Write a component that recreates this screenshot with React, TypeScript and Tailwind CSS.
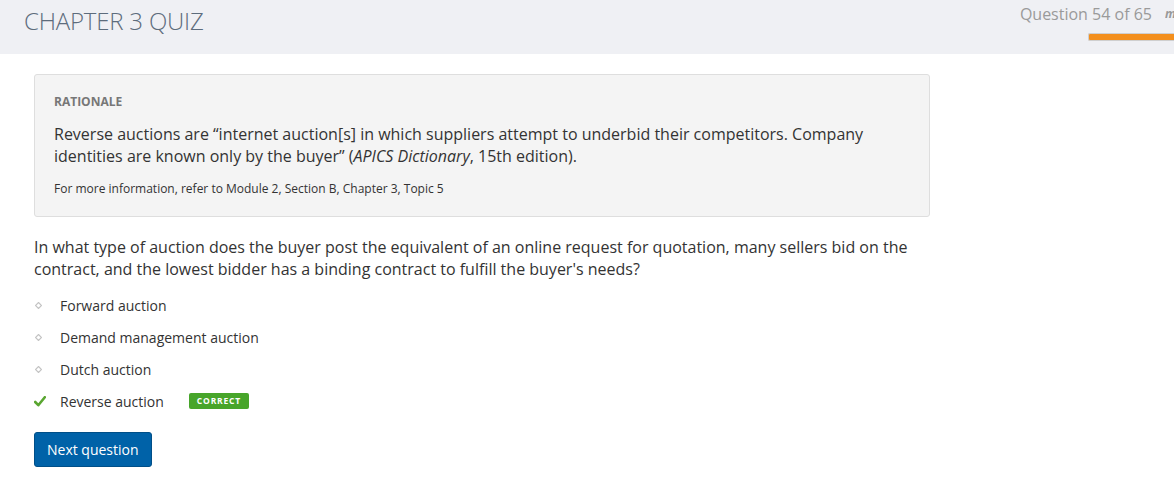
const options = [
  { label: "Forward auction", correct: false },
  { label: "Demand management auction", correct: false },
  { label: "Dutch auction", correct: false },
  { label: "Reverse auction", correct: true },
];

const Bullet = () => (
  <svg width="7" height="7" viewBox="0 0 7 7">
    <path d="M3.5 0.5 L6.5 3.5 L3.5 6.5 L0.5 3.5 Z" fill="none" stroke="#c4c4c4" strokeWidth="1.2" />
  </svg>
);

const Check = () => (
  <svg width="12" height="11" viewBox="0 0 12 11">
    <path d="M1.2 6 L4.3 9.2 L10.8 1.2" fill="none" stroke="#5aa631" strokeWidth="2.6" strokeLinecap="round" strokeLinejoin="round" />
  </svg>
);

export default function App() {
  return (
    <div className="w-[1174px] h-[485px] bg-white overflow-hidden font-['Open_Sans',sans-serif] text-[#333]">
      <header className="h-[54px] bg-[#eff0f4] flex justify-between">
        <h1 className="pl-[24px] pt-[5px] text-[24px] font-light text-[#5d6c7c] tracking-[-0.2px] leading-[32px]">
          CHAPTER 3 QUIZ
        </h1>
        <div className="flex flex-col items-end pt-[3px]">
          <div className="flex items-center whitespace-nowrap">
            <span className="text-[16px] text-[#9a9a9a] leading-[22px]">Question 54 of 65</span>
            <span className="ml-[13px] text-[12px] italic font-bold text-[#999] w-[9px] overflow-hidden">m</span>
          </div>
          <div className="mt-[8px] w-[86px] h-[8px] bg-[#f38f1d] border-l border-t border-b border-[#cfcfcf] rounded-l-[2px]" />
        </div>
      </header>

      <main className="pl-[34px] pt-[20px] w-[930px]">
        <section className="bg-[#f4f4f4] border border-[#dedede] rounded-[3px] px-[19px] pt-[17px] pb-[17px]">
          <div className="text-[12px] font-bold text-[#777] leading-[20px]">RATIONALE</div>
          <p className="mt-[11px] text-[16px] leading-[22px] text-[#333]">
            Reverse auctions are “internet auction[s] in which suppliers attempt to underbid their competitors. Company
            identities are known only by the buyer” (<em>APICS Dictionary</em>, 15th edition).
          </p>
          <p className="mt-[12px] text-[12px] leading-[20px] text-[#333]">
            For more information, refer to Module 2, Section B, Chapter 3, Topic 5
          </p>
        </section>

        <p className="mt-[19px] text-[16px] leading-[22px] text-[#333] pr-[10px]">
          In what type of auction does the buyer post the equivalent of an online request for quotation, many sellers bid on the
          contract, and the lowest bidder has a binding contract to fulfill the buyer's needs?
        </p>

        <ul className="mt-[9px] flex flex-col">
          {options.map((o) => (
            <li key={o.label} className="h-[32px] flex items-center text-[14px] text-[#333]">
              <span className="w-[26px] flex items-center justify-start">
                {o.correct ? <Check /> : <span className="pl-[1px] flex"><Bullet /></span>}
              </span>
              <span>{o.label}</span>
              {o.correct && (
                <span className="ml-[25px] h-[16px] px-[8px] bg-[#47a52a] rounded-[2px] text-white text-[8.5px] font-bold tracking-[0.8px] flex items-center">
                  CORRECT
                </span>
              )}
            </li>
          ))}
        </ul>

        <button className="mt-[15px] h-[35px] px-[12px] bg-[#0062a8] border border-[#004f88] rounded-[3px] text-white text-[14px] leading-[20px]">
          Next question
        </button>
      </main>
    </div>
  );
}
